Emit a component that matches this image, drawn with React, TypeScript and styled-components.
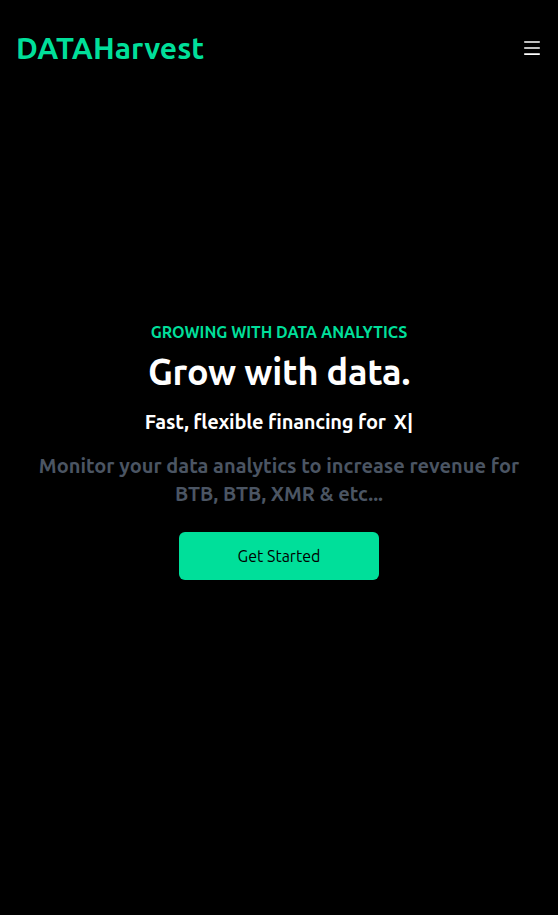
import React from "react";
import styled, { createGlobalStyle } from "styled-components";
import { AiOutlineMenu } from "react-icons/ai";

const Global = createGlobalStyle`
  html, body { margin: 0; padding: 0; background: #000; }
  body { font-family: Ubuntu, Oxygen, "Noto Sans", sans-serif; color: #fff; }
  * { box-sizing: border-box; }
`;

const Nav = styled.nav`
  display: flex;
  justify-content: space-between;
  align-items: center;
  height: 96px;
  max-width: 1240px;
  margin: 0 auto;
  padding: 0 16px;
  color: #fff;
`;

const Logo = styled.h1`
  width: 100%;
  margin: 0;
  font-size: 30px;
  line-height: 36px;
  font-weight: 700;
  color: #00df9a;
`;

const MenuButton = styled.div`
  display: flex;
  align-items: center;
`;

const Hero = styled.section`
  max-width: 800px;
  margin: -96px auto 0;
  width: 100%;
  height: 100vh;
  text-align: center;
  display: flex;
  flex-direction: column;
  justify-content: center;
`;

const Eyebrow = styled.p`
  margin: 0;
  padding: 8px;
  font-size: 16px;
  line-height: 24px;
  font-weight: 700;
  color: #00df9a;
`;

const Title = styled.h1`
  margin: 0;
  font-size: 36px;
  line-height: 40px;
  font-weight: 700;
  letter-spacing: -0.2px;
`;

const SubRow = styled.div`
  display: flex;
  justify-content: center;
  align-items: center;
`;

const Sub = styled.p`
  margin: 0;
  padding: 16px 0;
  font-size: 20px;
  line-height: 28px;
  font-weight: 700;
  letter-spacing: -0.2px;
`;

const Typed = styled.span`
  padding-left: 8px;
  font-size: 20px;
  line-height: 28px;
  font-weight: 700;
`;

const Desc = styled.p`
  margin: 0;
  padding: 0 16px;
  font-size: 20px;
  line-height: 28px;
  font-weight: 700;
  color: #4b5563;
`;

const Button = styled.button`
  background: #00df9a;
  width: 200px;
  border: none;
  border-radius: 6px;
  font-family: inherit;
  font-size: 16px;
  line-height: 24px;
  font-weight: 400;
  margin: 24px auto;
  padding: 12px 0;
  color: #000;
`;

export default function App() {
  return (
    <>
      <Global />
      <Nav>
        <Logo>DATAHarvest</Logo>
        <MenuButton>
          <AiOutlineMenu size={20} />
        </MenuButton>
      </Nav>
      <Hero>
        <Eyebrow>GROWING WITH DATA ANALYTICS</Eyebrow>
        <Title>Grow with data.</Title>
        <SubRow>
          <Sub>Fast, flexible financing for</Sub>
          <Typed>X|</Typed>
        </SubRow>
        <Desc>Monitor your data analytics to increase revenue for BTB, BTB, XMR &amp; etc...</Desc>
        <Button>Get Started</Button>
      </Hero>
    </>
  );
}
